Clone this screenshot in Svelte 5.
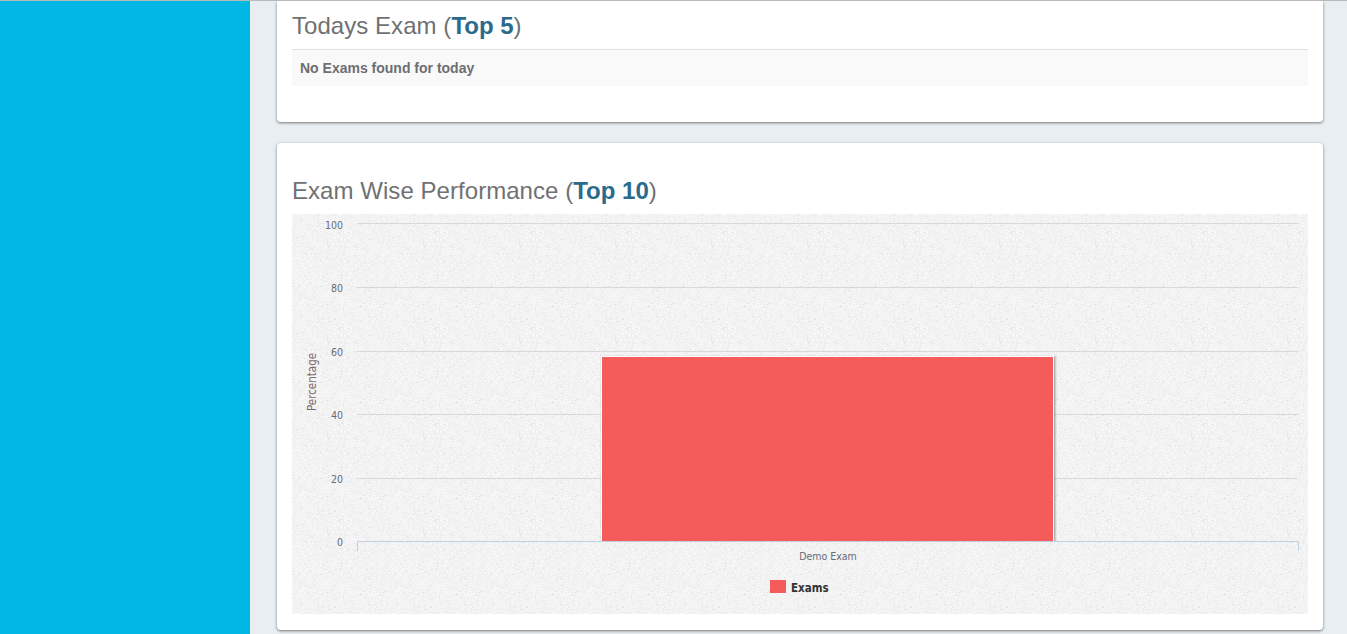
<script lang="ts">
  const ticks = [
    { label: "100", y: 9.5, dy: 5 },
    { label: "80", y: 73.5, dy: 4 },
    { label: "60", y: 137.5, dy: 4 },
    { label: "40", y: 200.5, dy: 4 },
    { label: "20", y: 264.5, dy: 4 },
    { label: "0", y: 327.5, dy: 4 }
  ];

  // speckle for the chart's paper texture, biased along the diagonal weave
  let seed = 11;
  function rand() {
    seed = (seed * 16807) % 2147483647;
    return seed / 2147483647;
  }
  let lightDots = "";
  let darkDots = "";
  let faintDots = "";
  for (let y = 0; y < 96; y++) {
    for (let x = 0; x < 96; x++) {
      const weave = (x + y) % 3 === 0;
      const r = rand();
      const dot = `M${x} ${y}h1v1h-1z`;
      if (r < (weave ? 0.5 : 0.12)) darkDots += dot;
      else if (r > (weave ? 0.99 : 0.55)) lightDots += dot;
      else if (r > 0.45 && r < 0.462) faintDots += dot;
    }
  }
</script>

<div class="page">
  <aside class="sidebar"></aside>
  <main class="content">
    <section class="card first">
      <h2>Todays Exam (<strong>Top 5</strong>)</h2>
      <div class="empty">No Exams found for today</div>
    </section>

    <section class="card second">
      <h2>Exam Wise Performance (<strong>Top 10</strong>)</h2>
      <svg class="chart" width="1016" height="400" viewBox="0 0 1016 400">
        <defs>
          <pattern id="paper" width="96" height="96" patternUnits="userSpaceOnUse">
            <rect width="96" height="96" fill="#f3f3f3" />
            <path d={darkDots} fill="#ececec" />
            <path d={lightDots} fill="#f8f8f8" />
            <path d={faintDots} fill="#dcdcdc" />
          </pattern>
          <clipPath id="plot">
            <rect x="65" y="0" width="941" height="327" />
          </clipPath>
        </defs>
        <rect width="1016" height="400" fill="url(#paper)" />

        {#each ticks as t}
          {#if t.label !== "0"}
            <line x1="65" x2="1006" y1={t.y} y2={t.y} stroke="#d8d8d8" />
          {/if}
          <text class="tick" x="51" y={t.y + t.dy} text-anchor="end">{t.label}</text>
        {/each}

        <text class="axis-title" transform="translate(24 168) rotate(-90)" text-anchor="middle">Percentage</text>

        <g clip-path="url(#plot)">
          <rect x="310.5" y="143.5" width="452" height="190" fill="none" stroke="#000" stroke-width="5" opacity="0.05" />
          <rect x="310.5" y="143.5" width="452" height="190" fill="none" stroke="#000" stroke-width="3" opacity="0.1" />
          <rect x="310.5" y="143.5" width="452" height="190" fill="none" stroke="#000" stroke-width="1" opacity="0.15" />
          <rect x="309.5" y="142.5" width="452" height="190" fill="#f65b5b" stroke="#fff" />
        </g>

        <path d="M65.5 337V327.5H1006.5V337" fill="none" stroke="#c0d0e0" />
        <text class="tick" x="536" y="346" text-anchor="middle">Demo Exam</text>

        <rect x="478" y="366" width="16" height="13" fill="#f65b5b" />
        <text class="legend" x="499" y="378">Exams</text>
      </svg>
    </section>
  </main>
</div>

<style>
  :global(body) {
    margin: 0;
    overflow: hidden;
  }
  .page {
    display: flex;
    height: 634px;
    box-sizing: border-box;
    border-top: 1px solid #b9b9b9;
    overflow: hidden;
    background: #e9eef2;
    font-family: "Liberation Sans", Arial, sans-serif;
  }
  .sidebar {
    width: 250px;
    flex: none;
    background: #00b8e3;
  }
  .content {
    flex: 1;
    display: flex;
    flex-direction: column;
    gap: 21px;
    padding: 0 24px 0 27px;
  }
  .card {
    background: #fff;
    padding: 0 15px;
    box-shadow: 0 1px 3px rgba(0, 0, 0, 0.5);
  }
  .first {
    height: 121px;
    box-sizing: border-box;
    border-radius: 0 0 4px 4px;
  }
  .second {
    height: 487px;
    box-sizing: border-box;
    border-radius: 4px;
    padding-top: 33px;
  }
  h2 {
    margin: 0;
    font-size: 24px;
    font-weight: 400;
    line-height: 30px;
    letter-spacing: 0.05px;
    color: #707173;
  }
  h2 strong {
    letter-spacing: 0;
    color: #2a6b8c;
  }
  .first h2 {
    padding-top: 10px;
    height: 38px;
    border-bottom: 1px solid #dfdfdf;
  }
  .empty {
    height: 36px;
    line-height: 36px;
    padding-left: 8px;
    background: #f9f9f9;
    font-size: 14px;
    font-weight: 700;
    color: #6d6e71;
  }
  .chart {
    display: block;
    margin-top: 8px;
  }
  .tick {
    font-family: "DejaVu Sans", sans-serif;
    font-stretch: condensed;
    font-size: 10.5px;
    fill: #666b78;
  }
  .axis-title {
    font-family: "DejaVu Sans", sans-serif;
    font-stretch: condensed;
    font-size: 11.5px;
    fill: #7d6a6a;
  }
  .legend {
    font-family: "DejaVu Sans", sans-serif;
    font-stretch: condensed;
    font-weight: 700;
    font-size: 11.5px;
    fill: #333;
  }
</style>
